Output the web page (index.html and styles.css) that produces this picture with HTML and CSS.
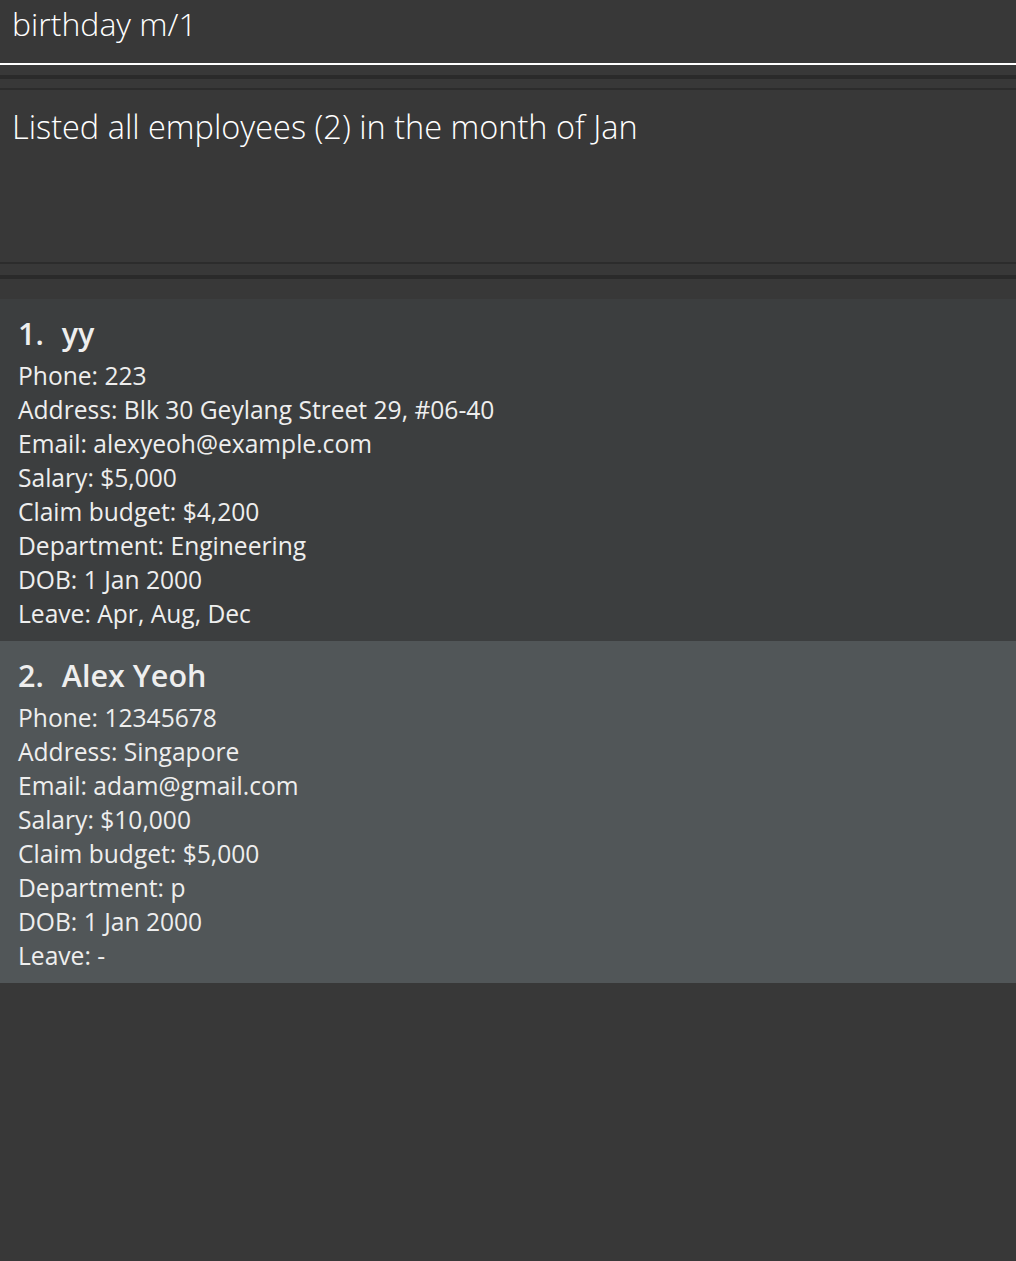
FILE: index.html
```html
<!DOCTYPE html>
<html>
<head>
<meta charset="utf-8">
<link rel="stylesheet" href="styles.css">
</head>
<body>
<div class="app">
  <div class="command-box">
    <div class="command-text">birthday m/1</div>
  </div>
  <div class="gap-a"></div>
  <div class="divider"></div>
  <div class="result-pane">
    <div class="result-display">Listed all employees (2) in the month of Jan</div>
  </div>
  <div class="gap-b"></div>
  <div class="divider"></div>
  <div class="list-pane">
    <div class="card card-even">
      <div class="card-name"><span class="card-id">1.</span><span>yy</span></div>
      <div class="card-line">Phone: 223</div>
      <div class="card-line">Address: Blk 30 Geylang Street 29, #06-40</div>
      <div class="card-line">Email: alexyeoh@example.com</div>
      <div class="card-line">Salary: $5,000</div>
      <div class="card-line">Claim budget: $4,200</div>
      <div class="card-line">Department: Engineering</div>
      <div class="card-line">DOB: 1 Jan 2000</div>
      <div class="card-line">Leave: Apr, Aug, Dec</div>
    </div>
    <div class="card card-odd">
      <div class="card-name"><span class="card-id">2.</span><span>Alex Yeoh</span></div>
      <div class="card-line">Phone: 12345678</div>
      <div class="card-line">Address: Singapore</div>
      <div class="card-line">Email: adam@gmail.com</div>
      <div class="card-line">Salary: $10,000</div>
      <div class="card-line">Claim budget: $5,000</div>
      <div class="card-line">Department: p</div>
      <div class="card-line">DOB: 1 Jan 2000</div>
      <div class="card-line">Leave: -</div>
    </div>
  </div>
</div>
</body>
</html>
```
FILE: styles.css
```css
html, body {
  margin: 0;
  padding: 0;
  background: #383838;
}
.app {
  width: 1016px;
  height: 1261px;
  display: flex;
  flex-direction: column;
  background: #383838;
  overflow: hidden;
}
.command-box {
  box-sizing: border-box;
  border-bottom: 2px solid #ffffff;
  height: 65px;
  padding: 2px 0 0 12px;
}
.command-text {
  font-family: "Open Sans", "Segoe UI", sans-serif;
  font-weight: 300;
  font-size: 32px;
  line-height: 44px;
  color: #ffffff;
}
.gap-a {
  height: 10px;
}
.divider {
  height: 4px;
  background: #2a2a2a;
}
.result-pane {
  margin-top: 9px;
  border-top: 2px solid #2c2c2c;
  border-bottom: 2px solid #2c2c2c;
  height: 172px;
  padding: 0 12px;
}
.result-display {
  font-family: "Open Sans", "Segoe UI", sans-serif;
  font-weight: 300;
  font-size: 32.5px;
  line-height: 44px;
  padding-top: 15px;
  color: #ffffff;
}
.gap-b {
  height: 11px;
}
.list-pane {
  padding-top: 20px;
  display: flex;
  flex-direction: column;
}
.card {
  padding: 14px 18px 10px;
  color: #eeeeee;
  font-family: "Open Sans", "Segoe UI", sans-serif;
}
.card-even {
  background: #3c3e3f;
}
.card-odd {
  background: #515658;
}
.card-name {
  font-size: 30.5px;
  font-weight: 600;
  line-height: 40px;
  margin-bottom: 6px;
  display: flex;
}
.card-id {
  margin-right: 18px;
}
.card-line {
  font-size: 24.6px;
  line-height: 34px;
}
```
